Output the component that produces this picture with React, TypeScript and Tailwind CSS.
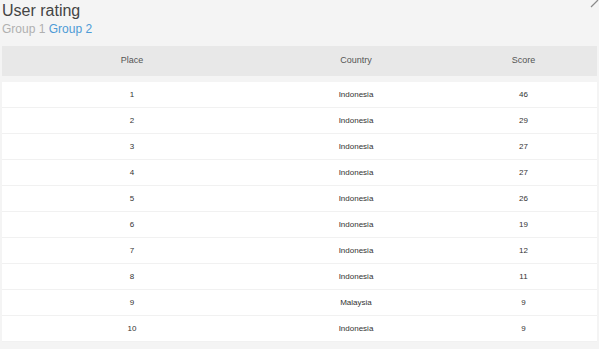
const rows = [
  { place: 1, country: "Indonesia", score: 46 },
  { place: 2, country: "Indonesia", score: 29 },
  { place: 3, country: "Indonesia", score: 27 },
  { place: 4, country: "Indonesia", score: 27 },
  { place: 5, country: "Indonesia", score: 26 },
  { place: 6, country: "Indonesia", score: 19 },
  { place: 7, country: "Indonesia", score: 12 },
  { place: 8, country: "Indonesia", score: 11 },
  { place: 9, country: "Malaysia", score: 9 },
  { place: 10, country: "Indonesia", score: 9 },
];

const App = () => (
  <div
    className="relative w-[599px] h-[349px] overflow-hidden bg-[#f4f4f4] pl-[2px] pr-[2px]"
    style={{ fontFamily: '"Liberation Sans", Arial, sans-serif' }}
  >
    <svg className="absolute right-0 top-0" width="10" height="10" viewBox="0 0 10 10">
      <line x1="2" y1="7" x2="9" y2="0" stroke="#8a8a8a" strokeWidth="1.2" />
    </svg>
    <div className="text-[16px] leading-[20px] text-[#444] pt-px">User rating</div>
    <div className="text-[12px] leading-[15px] mt-[1px]">
      <span className="text-[#b0b0b0]">Group 1</span>{" "}
      <span className="text-[#4d9bd6]">Group 2</span>
    </div>
    <div className="mt-[9px] w-[595px]">
      <div className="grid grid-cols-[260px_188px_147px] h-[30px] items-center bg-[#e8e8e8] text-[9px] text-[#555]">
        <div className="text-center">Place</div>
        <div className="text-center">Country</div>
        <div className="text-center">Score</div>
      </div>
      <div className="mt-[6px] bg-white">
        {rows.map((r) => (
          <div
            key={r.place}
            className="grid grid-cols-[260px_188px_147px] h-[26px] items-center border-b border-[#f1f1f1] text-[8px] text-[#333]"
          >
            <div className="text-center">{r.place}</div>
            <div className="text-center">{r.country}</div>
            <div className="text-center">{r.score}</div>
          </div>
        ))}
      </div>
    </div>
  </div>
);

export default App;
